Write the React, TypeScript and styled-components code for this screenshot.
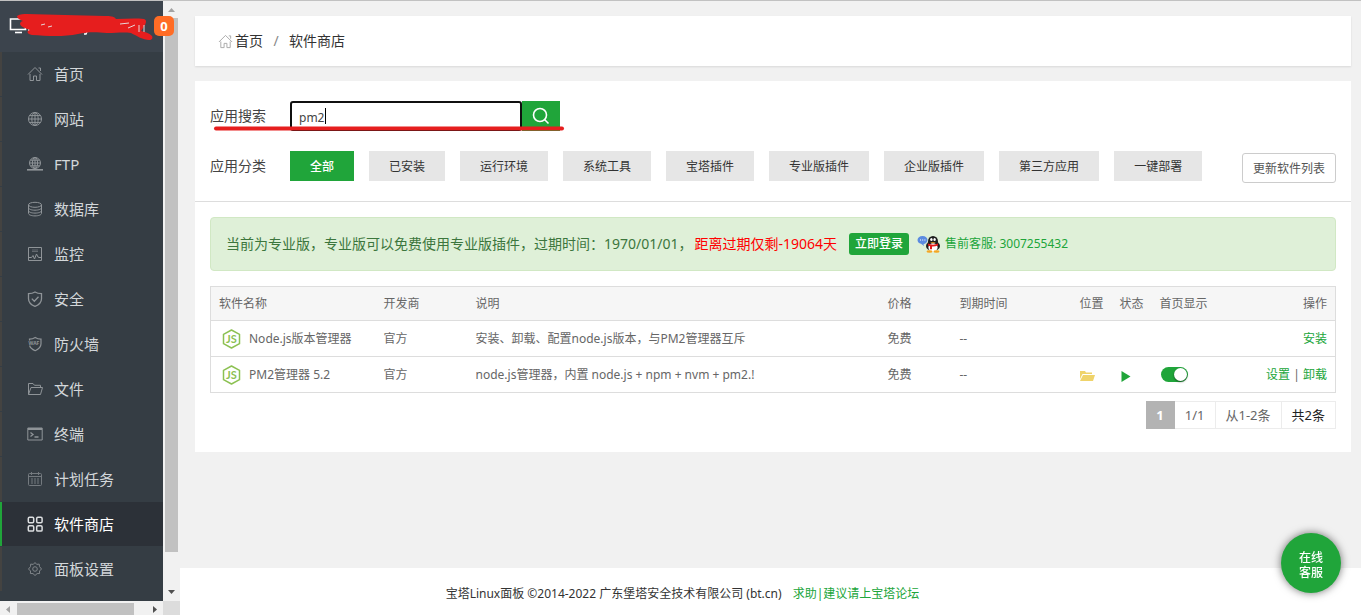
import React from "react";
import styled, { createGlobalStyle, css } from "styled-components";

const green = "#20a53a";

const GlobalStyle = createGlobalStyle`
  *, *::before, *::after { box-sizing: border-box; }
  body {
    margin: 0;
    background: #f1f1f1;
    color: #333;
    font: 12px/20px "Noto Sans", "Noto Sans CJK SC", sans-serif;
  }
  button, input { font: inherit; }
  a { color: ${green}; text-decoration: none; }
`;

const Page = styled.div`
  display: flex;
  min-height: 100vh;
  border-top: 1px solid #c1c1c1;
`;

/* ---------- sidebar ---------- */

const Sidebar = styled.aside`
  position: sticky;
  top: 0;
  flex: none;
  display: grid;
  grid-template-columns: 163px 17px;
  grid-template-rows: minmax(0, 1fr) 14px;
  height: calc(100vh - 1px);
`;

const SideContent = styled.div`
  background: #353d44;
`;

const Brand = styled.header`
  position: relative;
  height: 51px;
  padding: 15px 0 0 9px;
  background: #3c444d;
`;

const Badge = styled.span`
  position: absolute;
  z-index: 2;
  left: 154px;
  top: 15px;
  width: 20px;
  height: 20px;
  border-radius: 5px;
  background: #ff6c25;
  color: #fff;
  font-size: 13px;
  font-weight: 700;
  text-align: center;
`;

const Scribble = styled.svg`
  position: absolute;
  left: 0;
  top: 0;
`;

const Menu = styled.ul`
  margin: 0;
  padding: 0;
  list-style: none;
`;

const MenuLink = styled.a<{ $active?: boolean }>`
  display: flex;
  align-items: center;
  gap: 11px;
  height: 44px;
  margin-bottom: 1px;
  padding-left: 25px;
  border-left: 2px solid #444341;
  color: #d3d7da;
  font-size: 15px;
  ${(p) =>
    p.$active &&
    css`
      border-left-color: ${green};
      background: #2c3138;
      color: #fff;
    `}
`;

const MenuIcon = styled.svg<{ $active?: boolean }>`
  flex: none;
  fill: none;
  stroke: ${(p) => (p.$active ? "#dcdee0" : "#8f9498")};
  stroke-width: ${(p) => (p.$active ? 1.5 : 1)};
`;

const VBar = styled.div`
  display: flex;
  flex-direction: column;
  background: #f1f1f1;
`;

const HBar = styled.div`
  display: flex;
  background: #f1f1f1;
`;

const Corner = styled.div`
  background: #dcdcdc;
`;

const Arrow = styled.svg`
  flex: none;
`;

const VThumb = styled.div`
  flex: 534 1 0;
  margin: 0 2px;
  background: #c1c1c1;
`;

const VRest = styled.div`
  flex: 32 1 0;
`;

const HThumb = styled.div`
  width: 117px;
  margin-top: 2px;
  background: #c1c1c1;
`;

const HRest = styled.div`
  flex: 1;
`;

/* ---------- main ---------- */

const Main = styled.div`
  flex: 1;
  min-width: 0;
  display: flex;
  flex-direction: column;
`;

const Body = styled.main`
  flex: 1;
  padding: 15px 10px 15px 15px;
`;

const Breadcrumb = styled.nav`
  display: flex;
  align-items: center;
  height: 50px;
  margin-bottom: 15px;
  padding-left: 23px;
  background: #fff;
  box-shadow: 0 1px 2px rgba(0, 0, 0, 0.1);
  font-size: 14px;

  a {
    display: flex;
    align-items: center;
    gap: 2px;
    color: #333;
  }
`;

const Slash = styled.span`
  width: 26px;
  text-align: center;
  color: #888;
`;

const Panel = styled.section`
  padding-bottom: 23px;
  background: #fff;
`;

const Filters = styled.div`
  position: relative;
  display: grid;
  gap: 20px;
  padding: 20px 15px;
  border-bottom: 1px solid #ddd;
`;

const FilterRow = styled.div`
  display: flex;
  align-items: center;
  height: 30px;
`;

const filterLabel = css`
  flex: none;
  width: 80px;
  font-size: 14px;
  color: #444;
`;

const FieldLabel = styled.label`
  ${filterLabel}
`;

const GroupLabel = styled.span`
  ${filterLabel}
`;

const SearchField = styled.div`
  position: relative;
  width: 232px;
  height: 30px;
`;

const SearchInput = styled.input`
  width: 100%;
  height: 30px;
  padding: 2px 7px 0;
  border: 2px solid #101010;
  border-radius: 3px;
  outline: none;
  color: #444;
  font-size: 12px;
`;

const Caret = styled.span`
  position: absolute;
  left: 35px;
  top: 7px;
  width: 1px;
  height: 16px;
  background: #000;
`;

const SearchButton = styled.button`
  display: grid;
  place-items: center;
  width: 38px;
  height: 30px;
  padding: 0;
  border: 0;
  background: ${green};
`;

const Underline = styled.svg`
  position: absolute;
  left: 18px;
  top: 44px;
  pointer-events: none;
`;

const Categories = styled.div`
  display: flex;
  flex: 1;
  gap: 15px;
`;

const CategoryButton = styled.button<{ $active?: boolean }>`
  height: 30px;
  padding: 2px 20px 0;
  border: 0;
  background: ${(p) => (p.$active ? green : "#e6e6e6")};
  color: ${(p) => (p.$active ? "#fff" : "#333")};
  font-weight: ${(p) => (p.$active ? 500 : 400)};
  white-space: nowrap;
`;

const RefreshButton = styled.button`
  flex: none;
  height: 30px;
  margin-top: 4px;
  padding: 2px 10px 0;
  border: 1px solid #ccc;
  border-radius: 3px;
  background: #fff;
  color: #555;
`;

const Notice = styled.div`
  display: flex;
  align-items: center;
  height: 54px;
  margin: 15px;
  padding: 0 15px;
  border: 1px solid #d1e8c4;
  border-radius: 4px;
  background: #dff0d8;
  color: #3c763d;
  font-size: 14px;
  white-space: nowrap;
`;

const Expiry = styled.span`
  margin: 0 2px;
  color: #f00;
`;

const LoginButton = styled.button`
  height: 22px;
  margin: 0 8px 0 10px;
  padding: 0 6px;
  border: 0;
  border-radius: 3px;
  background: ${green};
  color: #fff;
  font-size: 12px;
  font-weight: 500;
  line-height: 22px;
`;

const Contact = styled.a`
  display: flex;
  align-items: center;
  gap: 4px;
  font-size: 12px;
`;

const TableWrap = styled.div`
  padding: 0 15px;
`;

const Table = styled.table`
  width: 100%;
  border: 1px solid #ddd;
  border-collapse: collapse;
  table-layout: fixed;
  color: #666;

  th, td {
    height: 36px;
    padding: 0 8px;
    border-top: 1px solid #ddd;
    font-weight: 400;
    text-align: left;
    white-space: nowrap;
  }
  th {
    height: 34px;
    background: #f6f6f6;
  }
  th:last-child, td:last-child { text-align: right; }
  svg { display: block; }
`;

const Software = styled.span`
  display: flex;
  align-items: center;
  gap: 7px;
  padding-left: 2px;
`;

const Toggle = styled.input`
  appearance: none;
  display: block;
  position: relative;
  width: 27px;
  height: 15px;
  margin: 0 1px;
  border-radius: 8px;
  background: ${green};

  &::after {
    content: "";
    position: absolute;
    right: 1px;
    top: 1px;
    width: 13px;
    height: 13px;
    border-radius: 50%;
    background: #fff;
    box-shadow: 0 1px 2px rgba(0, 0, 0, 0.5);
  }
`;

const Pager = styled.div`
  display: flex;
  justify-content: flex-end;
  margin: 8px 15px 0;
  font-size: 13px;
  line-height: 26px;
`;

const PageCell = styled.span<{ $tone?: "current" | "total" }>`
  padding: 0 10px;
  border: 1px solid #ececec;
  border-left-width: 0;
  color: ${(p) => (p.$tone === "total" ? "#222" : "#666")};
  ${(p) =>
    p.$tone === "current" &&
    css`
      border-color: #b3b3b3;
      background: #b3b3b3;
      color: #fff;
      font-weight: 700;
    `}
`;

const Footer = styled.footer`
  height: 47px;
  padding: 16px 176px 0 0;
  background: #fff;
  text-align: center;

  a { margin-left: 8px; }
`;

const ServiceButton = styled.button`
  position: fixed;
  right: 20px;
  bottom: 22px;
  width: 60px;
  height: 60px;
  padding: 4px 16px 0;
  border: 0;
  border-radius: 50%;
  background: ${green};
  box-shadow: 0 0 8px rgba(0, 0, 0, 0.55);
  color: #fff;
  font-weight: 500;
  line-height: 15px;
`;

/* ---------- icon drawings ---------- */

const housePath = <path d="M1 8.5 8 1.5l7 7M3 8v6.5h3.5V10h3v4.5H13V8M11.5 2h2v3" />;

const icons: Record<string, React.ReactNode> = {
  home: housePath,
  site: (
    <>
      <circle cx="8" cy="8" r="6.5" />
      <ellipse cx="8" cy="8" rx="3.2" ry="6.5" />
      <path d="M8 1.5v13M1.5 8h13M2.5 4.6h11M2.5 11.4h11" />
    </>
  ),
  ftp: (
    <>
      <circle cx="8" cy="7" r="5.5" />
      <ellipse cx="8" cy="7" rx="2.6" ry="5.5" />
      <path d="M8 1.5v11M2.5 7h11M3.5 4.2h9M3.5 9.8h9" />
      <path d="M0 13.8h16" strokeWidth="1.6" />
    </>
  ),
  database: (
    <>
      <ellipse cx="8" cy="3.8" rx="6.5" ry="2.5" />
      <path d="M1.5 3.8v8.6c0 1.4 2.9 2.5 6.5 2.5s6.5-1.1 6.5-2.5V3.800M1.5 6.700c0 1.4 2.9 2.5 6.5 2.5s6.5-1.1 6.5-2.5M1.5 9.600c0 1.4 2.9 2.5 6.5 2.5s6.5-1.1 6.5-2.5" />
    </>
  ),
  monitor: (
    <>
      <path d="M1.5 1.5h13v13h-13zM1.5 11.5h3l1.500-2 1.500 3.500 2-5 1.500 3 1 .5h2.500" />
      <path d="M5 4h6M5 5.500h6" opacity="0.5" />
    </>
  ),
  security: (
    <path
      d="M8 1c2 1.3 4.2 1.7 6.5 1.7v5c0 3.5-2.5 6-6.5 7.6-4-1.600-6.500-4.100-6.500-7.600v-5C3.800 2.700 6 2.300 8 1zM4.800 7.600l2.500 2.600 4.200-4.500"
      strokeWidth="1.3"
    />
  ),
  firewall: (
    <>
      <path
        d="M2.5 4.5V3.2C4.5 3.2 6.500 2.700 8.200 1.500c1.700 1.200 3.600 1.700 5.800 1.700v4.600c0 3.200-2.200 5.300-5.800 6.900-3-1.300-5-3-5.600-5.200"
        strokeWidth="1.2"
      />
      <text x="1.5" y="9" fontSize="5" fontWeight="700" fill="#8f9498" stroke="none">
        WAF
      </text>
    </>
  ),
  files: <path d="M1.5 13.5v-11h4.5l1.5 1.8h6v2.2M1.500 13.500 4 6.500h11.500l-2 7z" />,
  terminal: (
    <>
      <path d="M.8 2h14.4v12H.8z" />
      <path d="M1 3h14" strokeWidth="2" />
      <path d="m3.5 6.5 2.500 2-2.500 2M7.500 11h4" strokeWidth="1.3" />
    </>
  ),
  cron: (
    <g opacity="0.7">
      <rect x="1.5" y="2.5" width="13" height="12" rx="1" />
      <path d="M1.5 5.5h13M4.500 1v3M11.500 1v3" />
      <path d="M4 8h8M4 10h8M4 12h8" strokeDasharray="2 1" />
    </g>
  ),
  store: (
    <>
      <rect x="1.3" y="1.3" width="5.4" height="5.4" rx="1.2" />
      <rect x="9.7" y="1.3" width="5.4" height="5.4" rx="1.2" />
      <rect x="1.3" y="9.7" width="5.4" height="5.4" rx="1.2" />
      <rect x="9.7" y="9.7" width="5.4" height="5.4" rx="1.2" />
    </>
  ),
  settings: (
    <g opacity="0.85">
      <path d="M8 1.5l1.7 1.9 2.5-.3.3 2.5L14.500 8l-2 2 .1 2.500-2.500.1L8 14.500l-2-1.900-2.600-.1.100-2.500L1.500 8l2-2.400.2-2.500 2.600.3z" />
      <circle cx="8" cy="8" r="2.3" />
    </g>
  ),
};

const menu = [
  { icon: "home", label: "首页" },
  { icon: "site", label: "网站" },
  { icon: "ftp", label: "FTP" },
  { icon: "database", label: "数据库" },
  { icon: "monitor", label: "监控" },
  { icon: "security", label: "安全" },
  { icon: "firewall", label: "防火墙" },
  { icon: "files", label: "文件" },
  { icon: "terminal", label: "终端" },
  { icon: "cron", label: "计划任务" },
  { icon: "store", label: "软件商店", active: true },
  { icon: "settings", label: "面板设置" },
];

const categories = [
  "全部",
  "已安装",
  "运行环境",
  "系统工具",
  "宝塔插件",
  "专业版插件",
  "企业版插件",
  "第三方应用",
  "一键部署",
];

const NodeIcon = () => (
  <svg width="21" height="20" viewBox="0 0 21 20" fill="none" stroke="#8cc152">
    <path d="M10.5 1 18.5 5.3v9.4L10.5 19l-8-4.300V5.300z" strokeWidth="1.5" strokeLinejoin="round" />
    <text
      x="10.5"
      y="14"
      fill="#8cc152"
      stroke="none"
      fontFamily="Lato, sans-serif"
      fontSize="11"
      fontWeight="700"
      textAnchor="middle"
    >
      JS
    </text>
  </svg>
);

const QQIcon = () => (
  <svg width="24" height="18" viewBox="0 0 24 18">
    <path d="M5.5 1C8.500 1 10.500 2.700 10.500 5S8.500 9 6.500 9l.5 2-3-2.200C1.800 8.300.5 7 .5 5c0-2.300 2-4 5-4z" fill="#5b8be0" />
    <path d="M3 5h1M5.200 5h1M7.400 5h1" stroke="#fff" />
    <ellipse cx="16" cy="11" rx="7" ry="5" fill="#1c1c1c" />
    <ellipse cx="16" cy="6.5" rx="5" ry="5.5" fill="#1c1c1c" />
    <ellipse cx="16" cy="12.5" rx="4.6" ry="4.2" fill="#fff" />
    <ellipse cx="14.4" cy="4.5" rx="1.2" ry="1.6" fill="#fff" />
    <ellipse cx="17.6" cy="4.5" rx="1.2" ry="1.6" fill="#fff" />
    <path d="M13 7.200h6l-3 1.400z" fill="#f5a623" />
    <path d="M11 8.600c3 1.500 7 1.500 10 0v2c-2 .8-4 1.100-6 1v2.600h-2v-3l-2-.6z" fill="#e21b1b" />
    <ellipse cx="12.5" cy="16.5" rx="3" ry="1.3" fill="#f5a623" />
    <ellipse cx="19.5" cy="16.5" rx="3" ry="1.3" fill="#f5a623" />
  </svg>
);

export default function App() {
  return (
    <>
      <GlobalStyle />
      <Page>
        <Sidebar>
          <SideContent>
            <Brand>
              <svg width="18" height="18" viewBox="0 0 18 18" fill="none" stroke="#fff">
                <path d="M1.5 3h15v10.5h-15z" strokeWidth="1.6" />
                <path d="M6 16.5h7" strokeWidth="1.6" />
              </svg>
              <Scribble width="163" height="51" viewBox="0 1 163 51">
                <path d="M29 28v5M88 29l-2 5h-2" fill="none" stroke="#fff" strokeWidth="1.5" />
                <path
                  d="M17 16c3-2 7-2 10-2 25 1 50 1 78 2 5 0 9 0 11 3 9 0 18-1 28 0 3 1 2 4 1 6l-4 6c4 1 8 2 11 5 1 2 0 4-3 4-6 0-12-4-18-7-8-1-14 0-24 0-12-1-20-1-29 1-14 3-31 2-46 1-5-1-6-4-2-5-5-2-9-3-10-6 0-2 2-3 3-3-3-1-6-3-6-5z"
                  fill="#e61e1e"
                />
                <path
                  d="M41 25l4-1M48 27l4-1M120 24l9-1M128 28l7-3M139 25v7M144 25v7"
                  fill="none"
                  stroke="#e8d6d8"
                />
              </Scribble>
              <Badge>0</Badge>
            </Brand>
            <Menu>
              {menu.map((m) => (
                <li key={m.label}>
                  <MenuLink href="#" $active={m.active}>
                    <MenuIcon width="16" height="16" viewBox="0 0 16 16" $active={m.active}>
                      {icons[m.icon]}
                    </MenuIcon>
                    {m.label}
                  </MenuLink>
                </li>
              ))}
            </Menu>
          </SideContent>
          <VBar>
            <Arrow width="17" height="17" viewBox="0 0 17 17">
              <path d="M5 11h7L8.500 7z" fill="#a3a3a3" />
            </Arrow>
            <VThumb />
            <VRest />
            <Arrow width="17" height="17" viewBox="0 0 17 17">
              <path d="M5 6h7l-3.500 4z" fill="#505050" />
            </Arrow>
          </VBar>
          <HBar>
            <Arrow width="17" height="14" viewBox="0 0 17 14">
              <path d="M10 5v7L6 8.500z" fill="#a3a3a3" />
            </Arrow>
            <HThumb />
            <HRest />
            <Arrow width="17" height="14" viewBox="0 0 17 14">
              <path d="M7 5v7l4-3.500z" fill="#505050" />
            </Arrow>
          </HBar>
          <Corner />
        </Sidebar>

        <Main>
          <Body>
            <Breadcrumb>
              <a href="#">
                <svg width="15" height="15" viewBox="0 0 16 16" fill="none" stroke="#a8a8a8">
                  {housePath}
                </svg>
                首页
              </a>
              <Slash>/</Slash>
              <span>软件商店</span>
            </Breadcrumb>

            <Panel>
              <Filters>
                <FilterRow>
                  <FieldLabel htmlFor="search">应用搜索</FieldLabel>
                  <SearchField>
                    <SearchInput id="search" type="text" defaultValue="pm2" />
                    <Caret />
                  </SearchField>
                  <SearchButton aria-label="搜索">
                    <svg width="18" height="18" viewBox="0 0 18 18" fill="none" stroke="#fff" strokeWidth="1.6">
                      <circle cx="8" cy="8" r="6.5" />
                      <path d="m12.500 12.500 4 4" />
                    </svg>
                  </SearchButton>
                </FilterRow>
                <FilterRow>
                  <GroupLabel>应用分类</GroupLabel>
                  <Categories>
                    {categories.map((c, i) => (
                      <CategoryButton key={c} $active={i === 0}>
                        {c}
                      </CategoryButton>
                    ))}
                  </Categories>
                  <RefreshButton>更新软件列表</RefreshButton>
                </FilterRow>
                <Underline width="354" height="8" viewBox="0 0 354 8">
                  <path d="M3 3.500h346" stroke="#e61e1e" strokeWidth="4" strokeLinecap="round" />
                </Underline>
              </Filters>

              <Notice>
                当前为专业版，专业版可以免费使用专业版插件，过期时间：1970/01/01，
                <Expiry>距离过期仅剩-19064天</Expiry>
                <LoginButton>立即登录</LoginButton>
                <Contact href="#">
                  <QQIcon />
                  售前客服: 3007255432
                </Contact>
              </Notice>

              <TableWrap>
                <Table>
                  <colgroup>
                    <col width="165" />
                    <col width="92" />
                    <col />
                    <col width="72" />
                    <col width="120" />
                    <col width="40" />
                    <col width="40" />
                    <col width="80" />
                    <col width="104" />
                  </colgroup>
                  <thead>
                    <tr>
                      <th>软件名称</th>
                      <th>开发商</th>
                      <th>说明</th>
                      <th>价格</th>
                      <th>到期时间</th>
                      <th>位置</th>
                      <th>状态</th>
                      <th>首页显示</th>
                      <th>操作</th>
                    </tr>
                  </thead>
                  <tbody>
                    <tr>
                      <td>
                        <Software>
                          <NodeIcon />
                          Node.js版本管理器
                        </Software>
                      </td>
                      <td>官方</td>
                      <td>安装、卸载、配置node.js版本，与PM2管理器互斥</td>
                      <td>免费</td>
                      <td>--</td>
                      <td />
                      <td />
                      <td />
                      <td>
                        <a href="#">安装</a>
                      </td>
                    </tr>
                    <tr>
                      <td>
                        <Software>
                          <NodeIcon />
                          PM2管理器 5.2
                        </Software>
                      </td>
                      <td>官方</td>
                      <td>node.js管理器，内置 node.js + npm + nvm + pm2.!</td>
                      <td>免费</td>
                      <td>--</td>
                      <td>
                        <svg width="15" height="14" viewBox="0 0 15 14" fill="#efd36a">
                          <path d="M0 3h5l1 1.500h6V6H2.500L0 11z" />
                          <path d="M3 7h12l-2 6H0z" />
                        </svg>
                      </td>
                      <td>
                        <svg width="12" height="14" viewBox="0 0 12 14">
                          <path d="M1.500 3v11l9-5.500z" fill={green} />
                        </svg>
                      </td>
                      <td>
                        <Toggle type="checkbox" defaultChecked aria-label="首页显示" />
                      </td>
                      <td>
                        <a href="#">设置</a> | <a href="#">卸载</a>
                      </td>
                    </tr>
                  </tbody>
                </Table>
              </TableWrap>

              <Pager>
                <PageCell $tone="current">1</PageCell>
                <PageCell>1/1</PageCell>
                <PageCell>从1-2条</PageCell>
                <PageCell $tone="total">共2条</PageCell>
              </Pager>
            </Panel>
          </Body>
          <Footer>
            宝塔Linux面板 ©2014-2022 广东堡塔安全技术有限公司 (bt.cn) <a href="#">求助|建议请上宝塔论坛</a>
          </Footer>
        </Main>
        <ServiceButton>在线客服</ServiceButton>
      </Page>
    </>
  );
}
